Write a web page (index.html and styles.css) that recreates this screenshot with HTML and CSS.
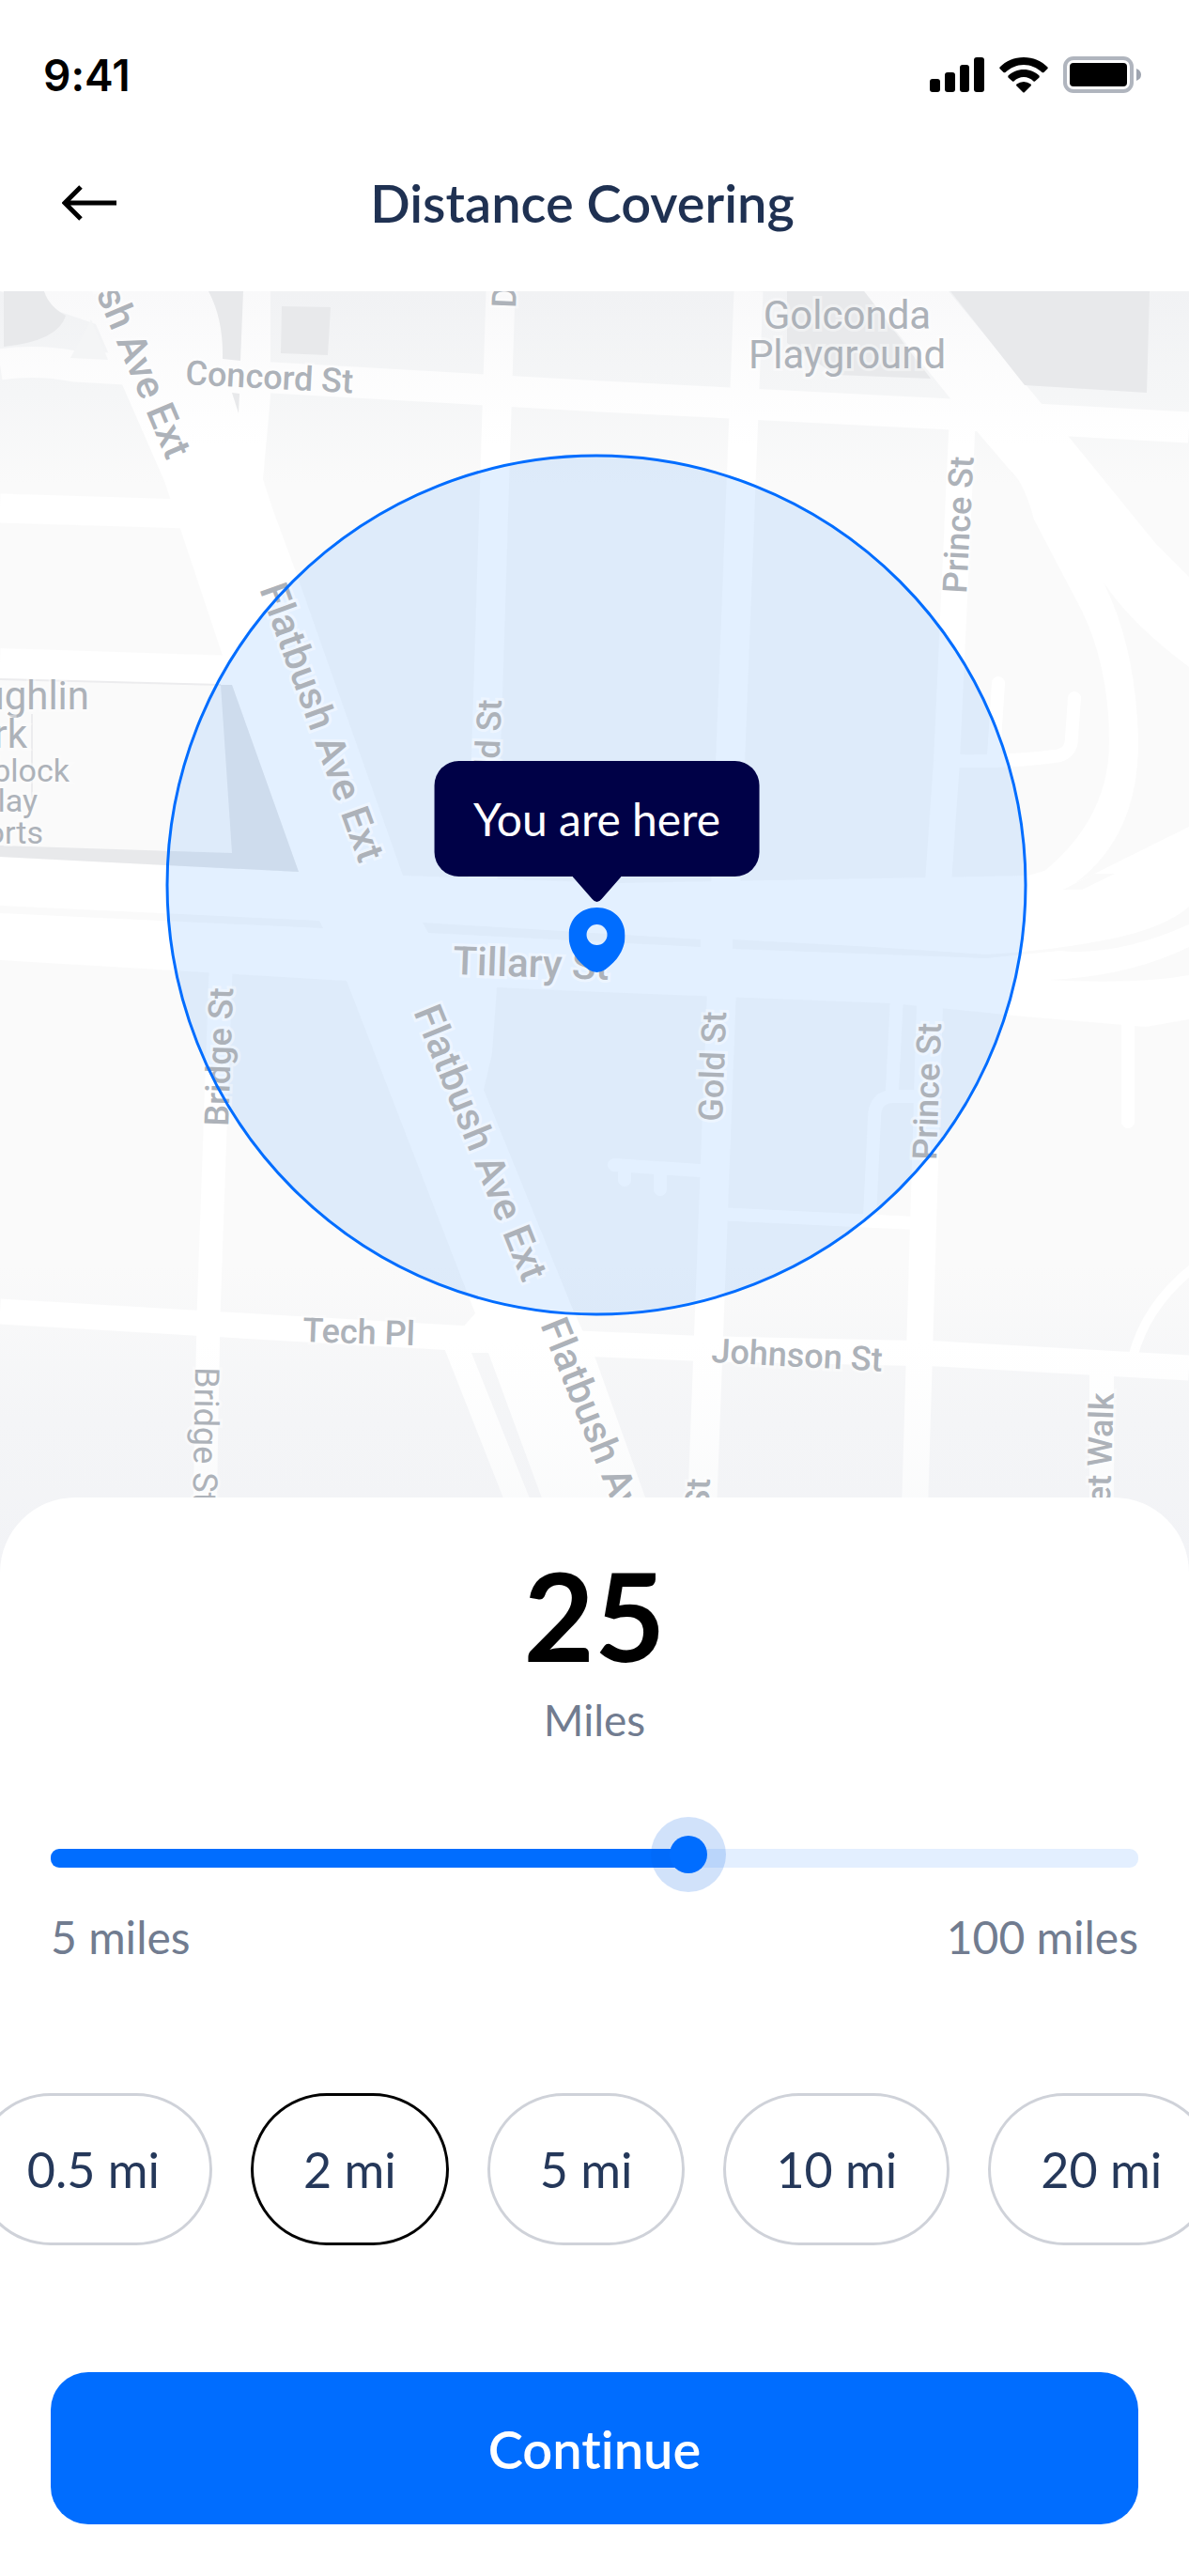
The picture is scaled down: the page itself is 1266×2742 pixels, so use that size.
FILE: index.html
```html
<!DOCTYPE html>
<html lang="en">
<head>
  <meta charset="UTF-8">
  <meta name="viewport" content="width=device-width, initial-scale=1.0">
  <title>Distance Covering</title>
  <link rel="stylesheet" href="styles.css">
</head>
<body>
  <div class="screen">
    <!-- status bar -->
    <div class="status-bar">
      <span class="time">9:41</span>
      <div class="status-icons">
        <svg width="58" height="38" viewBox="0 0 58 38" aria-hidden="true">
          <rect x="0" y="23" width="11" height="14" rx="3"/>
          <rect x="16" y="16" width="11" height="21" rx="3"/>
          <rect x="32" y="8" width="10" height="29" rx="3"/>
          <rect x="47" y="0" width="11" height="37" rx="3"/>
        </svg>
        <svg width="52" height="38" viewBox="0 0 52 38" aria-hidden="true">
          <path d="M26 0C36 0 45 4 51.500 10.500Q52 11.500 51.500 12L47.500 16Q46.500 16.500 45.500 16C40 11 33.500 8 26 8S12 11 6.500 16Q5.500 16.500 4.500 16L.5 12Q0 11.500 .5 10.500C7 4 16 0 26 0Z"/>
          <path d="M26 13C32.500 13 38 15.500 42.500 19.500Q43 20.500 42.500 21.500L38 25.500Q37 26 36.500 25.500C33.500 22.500 30 21 26 21S18.500 22.500 15.500 25.500Q15 26 14 25.500L9.500 21.500Q9 20.500 9.500 19.500C14 15.500 19.500 13 26 13Z"/>
          <path d="M26 26Q30 26 33.500 28.500Q34.500 29.500 33.500 30.500L27 37Q26 38 25 37L18.500 30.500Q17.500 29.500 18.500 28.500Q22 26 26 26Z"/>
        </svg>
        <svg width="84" height="40" viewBox="0 0 84 40" aria-hidden="true">
          <rect class="battery-line" x="2" y="2" width="71" height="35" rx="9"/>
          <rect x="7" y="7" width="61" height="25" rx="4"/>
          <path class="battery-tip" d="M78 13Q83 15 83 19.500T78 26Z"/>
        </svg>
      </div>
    </div>

    <!-- header -->
    <header class="header">
      <button class="back" type="button" aria-label="Back">
        <svg width="60" height="40" viewBox="0 0 60 40" aria-hidden="true">
          <path d="M58 20H3M20 3L3 20L20 37"/>
        </svg>
      </button>
      <h1 class="title">Distance Covering</h1>
    </header>

    <main>
      <!-- map -->
      <section class="map" aria-label="Map">
        <svg class="map-canvas" viewBox="0 310 1266 1364">
          <defs>
            <linearGradient id="land" gradientUnits="userSpaceOnUse" x1="0" y1="310" x2="0" y2="1674">
              <stop offset="0" stop-color="#f1f2f4"/>
              <stop offset=".08" stop-color="#f5f6f7"/>
              <stop offset=".15" stop-color="#fafafa"/>
              <stop offset=".76" stop-color="#fafafa"/>
              <stop offset=".88" stop-color="#f4f5f7"/>
              <stop offset="1" stop-color="#f2f3f6"/>
            </linearGradient>
            <linearGradient id="road" gradientUnits="userSpaceOnUse" x1="0" y1="310" x2="0" y2="1674">
              <stop offset="0" stop-color="#f9f9fa"/>
              <stop offset=".12" stop-color="#ffffff"/>
              <stop offset=".82" stop-color="#ffffff"/>
              <stop offset="1" stop-color="#f8f9fa"/>
            </linearGradient>
          </defs>

          <rect y="310" width="1266" height="1364" fill="url(#land)"/>

          <!-- roads -->
          <g class="road-area">
            <path d="M0 310H288V422L280 510L290 541L314 606L429 932L660 940L1095 932L1266 880V1085L1220 1093L1090 1082L950 1068L640 1056L529 1051L524 1121L515 1160L610 1394L634 1446L700 1630H590L520 1440H502L570 1610H542L473 1435L506 1398L369 1044L0 1022V912L318 928L247 729L237 698L192 563L175 512L102 345Z"/>
            <path d="M920 310H1010L1110 431L1138 465L1230 578L1266 614V940H1095Q1181 880 1181 790Q1181 700 1144 635L1101 553Q1090 512 1075 500L1040 459Z"/>
          </g>
          <g class="road">
            <path stroke-width="33" d="M0 388Q40 382 80 390L290 402L640 422L1013 441L1266 455"/>
            <path stroke-width="31" d="M0 541L200 547"/>
            <path stroke-width="32" d="M0 706L250 714"/>
            <path stroke-width="31" d="M533 310L517 820L514 940"/>
            <path stroke-width="31" d="M797 310L778 800L745 1674"/>
            <path stroke-width="28" d="M1025 440L1008 810L990 1069L972 1674"/>
            <path stroke-width="27" d="M0 1396L290 1413L520 1426L760 1436L1000 1441L1266 1456"/>
            <path stroke-width="25" d="M235 1034L222 1400L217 1674"/>
            <path stroke-width="26" d="M1173 1455V1674"/>
            <path stroke-width="10" d="M1270 1350Q1220 1390 1206 1445"/>
          </g>
          <g class="road lane">
            <path d="M1063 727L1058 805"/>
            <path d="M1144 743L1141 785Q1141 804 1122 805Q1080 811 1015 810"/>
            <path d="M1201 1085V1194"/>
            <path d="M955 1060L950 1160M975 1167H952Q931 1167 931 1190L926 1296"/>
            <path d="M760 1292L975 1302M654 1240L745 1246M665 1242V1256M703 1244V1266"/>
          </g>

          <!-- land between the ramps and lanes -->
          <g fill="#fafafa">
            <path d="M1175 620Q1205 665 1266 710V880L1145 940Q1212 890 1212 790Q1210 690 1175 620Z"/>
            <path d="M0 964L340 980L344 988L0 972Z"/>
            <path d="M450 982L746 1000V1008L456 993Z"/>
            <path d="M780 1000L930 1008L1050 1016Q1120 1012 1180 1000T1266 965V984Q1190 1018 1128 1012L1050 1020L780 1010Z"/>
            <path d="M1116 1043Q1200 1040 1266 1008V1038Q1210 1048 1116 1043Z"/>
            <path d="M1132 947L1165 930H1187L1152 947Z"/>
          </g>
          <path d="M75 381L97 340L115 383Z" fill="#f4f5f6"/>

          <!-- parks -->
          <g class="park">
            <path d="M4 310H47Q52 326 70 336Q62 363 4 369Z"/>
            <path d="M222 310H259L256 384L237 382Q238 340 222 310Z"/>
            <path d="M247 418L255 419L254 440Z"/>
            <path d="M300 326L352 327L349 378L299 376Z"/>
            <path d="M838 310H920L991 403L890 399L838 365Z"/>
            <path d="M1012 310H1224L1221 418L1091 410Z"/>
            <path d="M235 729H247L318 928L0 912V900L247 908Z"/>
          </g>
          <path class="park-edge" d="M0 723L235 729"/>
          <path class="park-edge" d="M34 760V850"/>

          <circle class="range-fill" cx="635" cy="942" r="458"/>

          <!-- street names -->
          <g class="street avenue">
            <text text-anchor="end" transform="translate(178 491) rotate(67)">Flatbush Ave Ext</text>
            <text transform="translate(276 627) rotate(70)">Flatbush Ave Ext</text>
            <text transform="translate(440 1077) rotate(68)">Flatbush Ave Ext</text>
            <text transform="translate(575 1410) rotate(68)">Flatbush Ave Ext</text>
            <text transform="translate(482 1037) rotate(2)">Tillary St</text>
          </g>
          <g class="street">
            <text transform="translate(197 409) rotate(3)">Concord St</text>
            <text transform="translate(322 1428) rotate(2)">Tech Pl</text>
            <text transform="translate(757 1450) rotate(3)">Johnson St</text>
            <text transform="translate(549 328) rotate(-88)">D</text>
            <text text-anchor="end" transform="translate(534 745) rotate(-88)">ld St</text>
            <text transform="translate(1029 632) rotate(-87)">Prince St</text>
            <text transform="translate(997 1235) rotate(-88)">Prince St</text>
            <text transform="translate(769 1194) rotate(-88)">Gold St</text>
            <text text-anchor="end" transform="translate(756 1574) rotate(-88)">Gold St</text>
            <text transform="translate(243 1199) rotate(-88)">Bridge St</text>
            <text class="thin" transform="translate(208 1455) rotate(91)">Bridge St</text>
            <text text-anchor="end" transform="translate(1186 1483) rotate(-88)">Fleet Walk</text>
          </g>
          <g class="place">
            <text x="902" y="350" text-anchor="middle">Golconda</text>
            <text x="902" y="392" text-anchor="middle">Playground</text>
            <text x="95" y="755" text-anchor="end">McLaughlin</text>
            <text x="29" y="796" text-anchor="end">Park</text>
          </g>
          <g class="place small">
            <text x="74" y="832" text-anchor="end">block</text>
            <text x="40" y="864" text-anchor="end">Play</text>
            <text x="46" y="898" text-anchor="end">Sports</text>
          </g>

          <circle class="range-line" cx="635" cy="942" r="457"/>
        </svg>

        <div class="marker">
          <div class="tooltip">You are here
            <svg class="tail" width="52" height="28" viewBox="0 0 52 28" aria-hidden="true">
              <path d="M0 0H52L31 24Q26 30 21 24Z"/>
            </svg>
          </div>
          <svg class="pin" width="60" height="70" viewBox="0 0 60 70" aria-hidden="true">
            <path fill-rule="evenodd" d="M30 0C47 0 60 12 60 30C60 46 50 58 39 66Q30 72 21 66C10 58 0 46 0 30C0 12 13 0 30 0ZM30 18A11 11 0 1 0 30 40A11 11 0 1 0 30 18Z"/>
          </svg>
        </div>
      </section>

      <!-- distance sheet -->
      <section class="sheet">
        <div class="value">25</div>
        <label class="unit" for="distance">Miles</label>
        <input class="slider" id="distance" type="range" min="5" max="100" value="61" style="--fill: 58%">
        <div class="limits">
          <span>5 miles</span>
          <span>100 miles</span>
        </div>
        <div class="chips">
          <button class="chip" type="button">0.5 mi</button>
          <button class="chip active" type="button">2 mi</button>
          <button class="chip" type="button">5 mi</button>
          <button class="chip" type="button">10 mi</button>
          <button class="chip" type="button">20 mi</button>
        </div>
        <button class="continue" type="button">Continue</button>
      </section>
    </main>
  </div>
</body>
</html>
```
FILE: styles.css
```css
* {
  margin: 0;
  padding: 0;
  box-sizing: border-box;
}
body {
  background-color: #fff;
  font-family: Lato, "Open Sans", sans-serif;
  font-variant-ligatures: none;
  color: #1f3152;
}
button {
  border: none;
  background: none;
  font-family: inherit;
  font-variant-ligatures: inherit;
  color: inherit;
  cursor: pointer;
}
svg {
  display: block;
}
.screen {
  overflow: hidden;
}

/* status bar */
.status-bar {
  display: flex;
  justify-content: space-between;
  align-items: center;
  padding: 50px 50px 0 46px;
  color: #000;
}
.time {
  font-family: Inter, sans-serif;
  font-size: 46px;
  line-height: 60px;
  font-weight: 600;
}
.status-icons {
  display: flex;
  align-items: center;
  gap: 16px;
}
.battery-line {
  fill: none;
  stroke: #b0b5be;
  stroke-width: 4;
}
.battery-tip {
  fill: #9fa5b0;
}

/* header */
.header {
  display: flex;
  align-items: center;
  height: 200px;
  padding: 12px 164px 0 54px;
}
.back {
  padding: 12px;
}
.back svg {
  fill: none;
  stroke: #000;
  stroke-width: 5;
}
.title {
  flex: 1;
  text-align: center;
  font-size: 56px;
  line-height: 68px;
  font-weight: 600;
}

/* map */
.map {
  position: relative;
}
.map-canvas {
  width: 100%;
  height: auto;
}
.road-area {
  fill: url(#road);
}
.road {
  fill: none;
  stroke: url(#road);
  stroke-linejoin: round;
}
.lane {
  stroke: #fff;
  stroke-width: 14;
  stroke-linecap: round;
}
.park {
  fill: #e8e9eb;
}
.park-edge {
  fill: none;
  stroke: #ececee;
  stroke-width: 2;
}
.range-fill {
  fill: #0075ff;
  fill-opacity: 0.11;
}
.range-line {
  fill: none;
  stroke: #006dff;
  stroke-width: 3;
}
.street, .place {
  font-family: Roboto, sans-serif;
  fill: #adb2b9;
  stroke: rgba(255, 255, 255, 0.4);
  stroke-width: 6;
  paint-order: stroke;
}
.street {
  font-size: 36px;
  font-weight: 500;
}
.avenue {
  font-size: 42px;
}
.thin {
  font-weight: 400;
}
.place {
  font-size: 42px;
}
.small {
  font-size: 34px;
}

/* marker */
.marker {
  position: absolute;
  top: 53.2%;
  left: 50.2%;
  display: flex;
  flex-direction: column;
  align-items: center;
  gap: 33px;
  transform: translate(-50%, -100%);
}
.tooltip {
  position: relative;
  padding: 30px 42px;
  border-radius: 26px;
  background-color: #000147;
  color: #fff;
  font-size: 48px;
  line-height: 63px;
  white-space: nowrap;
}
.tail {
  position: absolute;
  top: 100%;
  left: 50%;
  margin-left: -26px;
  fill: #000147;
}
.pin {
  fill: #006dff;
}

/* sheet */
.sheet {
  position: relative;
  display: flex;
  flex-direction: column;
  margin-top: -80px;
  padding: 60px 54px 55px;
  border-radius: 80px 80px 0 0;
  background-color: #fff;
  text-align: center;
}
.value {
  font-size: 130px;
  line-height: 130px;
  font-weight: 700;
  color: #000;
}
.unit, .limits {
  font-size: 46px;
  line-height: 60px;
  color: #717c90;
}
.unit {
  margin-top: 17px;
}
.limits {
  display: flex;
  justify-content: space-between;
  margin-top: 44px;
  font-size: 48px;
}

/* slider */
.slider {
  appearance: none;
  -webkit-appearance: none;
  width: 100%;
  height: 20px;
  margin-top: 107px;
  background: none;
}
.slider::-webkit-slider-runnable-track {
  height: 20px;
  border-radius: 9px;
  background: linear-gradient(to right, #006dff var(--fill), #e3efff var(--fill));
}
.slider::-webkit-slider-thumb {
  -webkit-appearance: none;
  width: 40px;
  height: 40px;
  margin-top: -14px;
  border-radius: 50%;
  background-color: #006dff;
  box-shadow: 0 0 0 20px rgba(0, 95, 228, 0.18);
}

/* distance chips */
.chips {
  display: flex;
  justify-content: center;
  gap: 41px;
  margin: 136px -54px 0;
}
.chip {
  flex: none;
  height: 162px;
  padding: 0 53px;
  border: 3px solid #cfd2d9;
  border-radius: 81px;
  font-size: 52px;
  color: #25385a;
}
.chip.active {
  border-color: #000;
}
.continue {
  height: 162px;
  margin-top: 135px;
  border-radius: 40px;
  background-color: #006dff;
  color: #fff;
  font-size: 56px;
  font-weight: 600;
}
```
